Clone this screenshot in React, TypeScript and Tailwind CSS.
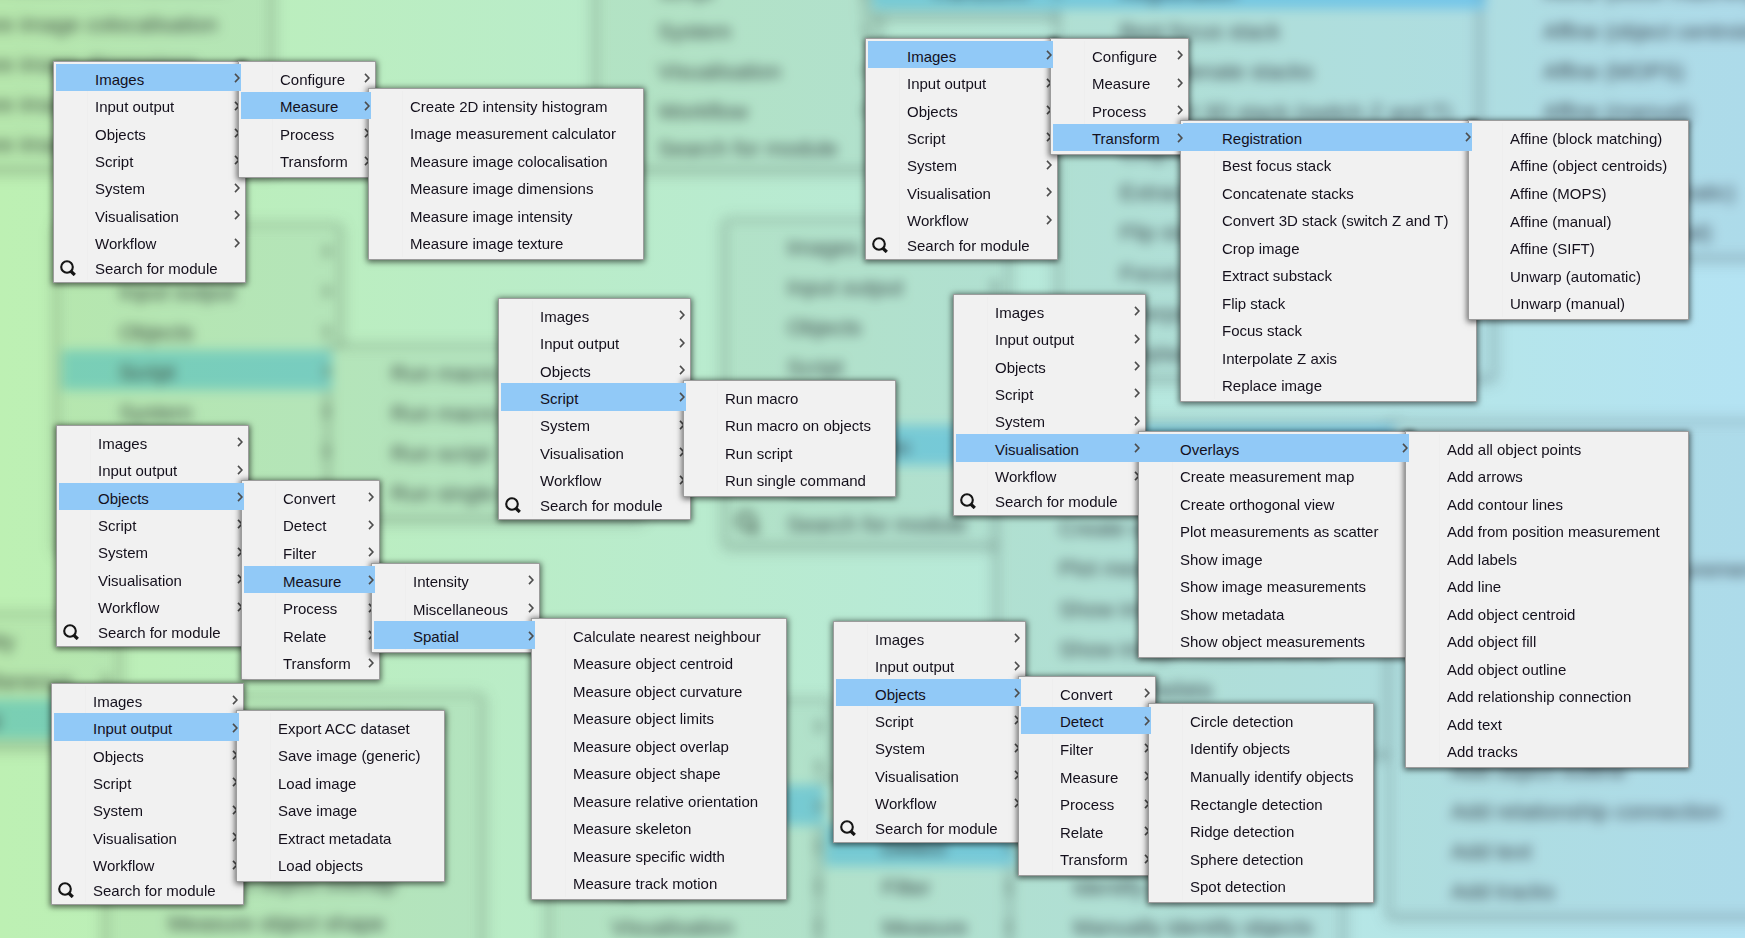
const MAIN = ["Images", "Input output", "Objects", "Script", "System", "Visualisation", "Workflow"];

type MenuData = {
  x: number;
  y: number;
  w: number;
  items: string[];
  active?: string;
  parents?: number;
  search?: boolean;
};

const IMAGE_KINDS = ["Configure", "Measure", "Process", "Transform"];
const OBJECT_KINDS = ["Convert", "Detect", "Filter", "Measure", "Process", "Relate", "Transform"];

function root(x: number, y: number, active: string): MenuData {
  return { x, y, w: 193, items: MAIN, active, parents: 7, search: true };
}

const MENUS: MenuData[] = [
  root(53, 61, "Images"),
  { x: 238, y: 61, w: 138, items: IMAGE_KINDS, active: "Measure", parents: 4 },
  {
    x: 368, y: 88, w: 276,
    items: [
      "Create 2D intensity histogram", "Image measurement calculator", "Measure image colocalisation",
      "Measure image dimensions", "Measure image intensity", "Measure image texture",
    ],
  },
  root(498, 298, "Script"),
  { x: 683, y: 380, w: 213, items: ["Run macro", "Run macro on objects", "Run script", "Run single command"] },
  root(865, 38, "Images"),
  { x: 1050, y: 38, w: 139, items: IMAGE_KINDS, active: "Transform", parents: 4 },
  {
    x: 1180, y: 120, w: 297, active: "Registration", parents: 1,
    items: [
      "Registration", "Best focus stack", "Concatenate stacks", "Convert 3D stack (switch Z and T)", "Crop image",
      "Extract substack", "Flip stack", "Focus stack", "Interpolate Z axis", "Replace image",
    ],
  },
  {
    x: 1468, y: 120, w: 221,
    items: [
      "Affine (block matching)", "Affine (object centroids)", "Affine (MOPS)", "Affine (manual)", "Affine (SIFT)",
      "Unwarp (automatic)", "Unwarp (manual)",
    ],
  },
  root(953, 294, "Visualisation"),
  {
    x: 1138, y: 431, w: 276, active: "Overlays", parents: 1,
    items: [
      "Overlays", "Create measurement map", "Create orthogonal view", "Plot measurements as scatter", "Show image",
      "Show image measurements", "Show metadata", "Show object measurements",
    ],
  },
  {
    x: 1405, y: 431, w: 284,
    items: [
      "Add all object points", "Add arrows", "Add contour lines", "Add from position measurement", "Add labels",
      "Add line", "Add object centroid", "Add object fill", "Add object outline", "Add relationship connection",
      "Add text", "Add tracks",
    ],
  },
  root(56, 425, "Objects"),
  { x: 241, y: 480, w: 139, items: OBJECT_KINDS, active: "Measure", parents: 7 },
  { x: 371, y: 563, w: 169, items: ["Intensity", "Miscellaneous", "Spatial"], active: "Spatial", parents: 3 },
  {
    x: 531, y: 618, w: 256,
    items: [
      "Calculate nearest neighbour", "Measure object centroid", "Measure object curvature", "Measure object limits",
      "Measure object overlap", "Measure object shape", "Measure relative orientation", "Measure skeleton",
      "Measure specific width", "Measure track motion",
    ],
  },
  root(51, 683, "Input output"),
  {
    x: 236, y: 710, w: 209,
    items: ["Export ACC dataset", "Save image (generic)", "Load image", "Save image", "Extract metadata", "Load objects"],
  },
  root(833, 621, "Objects"),
  { x: 1018, y: 676, w: 138, items: OBJECT_KINDS, active: "Detect", parents: 7 },
  {
    x: 1148, y: 703, w: 226,
    items: [
      "Circle detection", "Identify objects", "Manually identify objects", "Rectangle detection", "Ridge detection",
      "Sphere detection", "Spot detection",
    ],
  },
];

const FRONT = {
  zoom: 1, dx: 0, dy: 0,
  panel: "bg-[#f1f1f1] border border-[#9c9c9c] pt-[2px] pb-[3px] shadow-[0_1px_6px_1px_rgba(0,0,0,0.6)]",
  text: "text-[15px]",
  row: "ml-[2px] mr-[4px] pl-[39px] pr-[1px] pt-[3px]",
  active: "bg-[#91c9f7]",
  search: "h-[23px] ml-[2px] pl-[39px] pt-[3px]",
  glass: "left-[4px] top-[4px] size-[16px]",
  chevron: "h-[10px] w-[6px]",
  gutter: "left-[33px]",
};

const BACK = {
  zoom: 1.468, dx: -674, dy: -212,
  panel: "bg-[#f3f3f3] border-2 border-[#a8a8a8] pt-[3px] pb-[4px] shadow-[0_2px_9px_2px_rgba(0,0,0,0.3)]",
  text: "text-[22px]",
  row: "ml-[3px] mr-[6px] pl-[57px] pr-[1px] pt-[5px]",
  active: "bg-[#86d1ff]",
  search: "h-[34px] ml-[3px] pl-[57px] pt-[5px]",
  glass: "left-[6px] top-[6px] size-[23px]",
  chevron: "h-[15px] w-[9px]",
  gutter: "left-[48px]",
};

type Look = typeof FRONT;

function Chevron({ className }: { className: string }) {
  return (
    <svg viewBox="0 0 6 10" aria-hidden="true" className={`mb-[2px] shrink-0 ${className}`}>
      <path d="M1 0.9 L4.9 5 L1 9.1" fill="none" stroke="#4d4d4d" strokeWidth="1.6" />
    </svg>
  );
}

function Glass({ className }: { className: string }) {
  return (
    <svg viewBox="0 0 16 16" aria-hidden="true" className={`absolute ${className}`}>
      <circle cx="7" cy="7" r="5.8" fill="none" stroke="#151515" strokeWidth="2.1" />
      <path d="M10.6 11 L14.8 15" stroke="#151515" strokeWidth="3.2" />
    </svg>
  );
}

function Menu({ menu, look, inert }: { menu: MenuData; look: Look; inert: boolean }) {
  const { x, y, w, items, active, parents = 0, search } = menu;
  const height = items.length * 27.5 + (search ? 29 : 7);
  const place = {
    left: Math.round(x * look.zoom + look.dx),
    top: Math.round(y * look.zoom + look.dy),
    width: Math.round(w * look.zoom),
    height: Math.round(height * look.zoom),
  };
  return (
    <div role="menu" className={`absolute flex flex-col ${look.panel} ${look.text}`} style={place}>
      <span className={`absolute inset-y-[2px] w-px bg-[#eeeeee] ${look.gutter}`} />
      {items.map((item, i) => (
        <button
          key={item}
          type="button"
          role="menuitem"
          tabIndex={inert ? -1 : 0}
          aria-haspopup={i < parents ? "menu" : undefined}
          className={`flex min-h-0 flex-1 items-center justify-between whitespace-nowrap text-left ${look.row} ${
            item === active ? `relative z-10 ${look.active}` : ""
          }`}
        >
          <span>{item}</span>
          {i < parents && <Chevron className={look.chevron} />}
        </button>
      ))}
      {search && (
        <button
          type="button"
          role="menuitem"
          tabIndex={inert ? -1 : 0}
          className={`relative flex shrink-0 items-center whitespace-nowrap text-left ${look.search}`}
        >
          <Glass className={look.glass} />
          Search for module
        </button>
      )}
    </div>
  );
}

export default function App() {
  return (
    <main className="relative isolate min-h-screen w-full overflow-hidden bg-linear-to-r from-[#bdf0b3] to-[#b4e3f3] font-['Liberation_Sans',Arial,sans-serif] leading-none text-[#14101c]">
      <div aria-hidden="true" className="pointer-events-none absolute inset-0 isolate opacity-75 mix-blend-multiply blur-[6px]">
        {MENUS.map((menu, i) => (
          <Menu key={i} menu={menu} look={BACK} inert />
        ))}
      </div>
      <div className="absolute inset-0 isolate">
        {MENUS.map((menu, i) => (
          <Menu key={i} menu={menu} look={FRONT} inert={false} />
        ))}
      </div>
    </main>
  );
}
